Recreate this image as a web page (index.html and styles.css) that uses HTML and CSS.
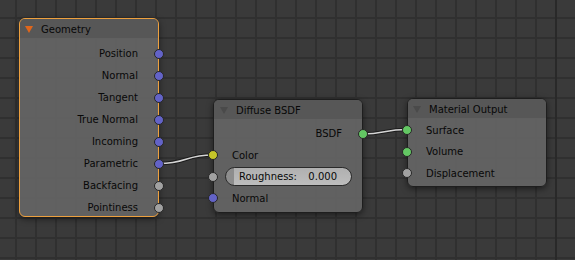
FILE: index.html
```html
<!DOCTYPE html>
<html lang="en">
<head>
    <meta charset="UTF-8">
    <meta name="viewport" content="width=device-width, initial-scale=1.0">
    <title>Node Editor</title>
    <link rel="stylesheet" href="styles.css">
</head>
<body>
    <div class="editor">
        <!-- Links are drawn under the nodes -->
        <svg class="links" width="575" height="260" viewBox="0 0 575 260">
            <path class="link-outline" d="M159,163.5 C187,163.5 185,155 213,155"/>
            <path class="link" d="M159,163.5 C187,163.5 185,155 213,155"/>
            <path class="link-outline" d="M362,134 C385,134 384,129.5 407,129.5"/>
            <path class="link" d="M362,134 C385,134 384,129.5 407,129.5"/>
        </svg>

        <!-- Geometry (input node, selected) -->
        <div class="node node-geometry selected">
            <div class="node-header">
                <span class="toggle"></span>
                <span class="title">Geometry</span>
            </div>
            <div class="node-body">
                <div class="row out">Position<span class="socket vector"></span></div>
                <div class="row out">Normal<span class="socket vector"></span></div>
                <div class="row out">Tangent<span class="socket vector"></span></div>
                <div class="row out">True Normal<span class="socket vector"></span></div>
                <div class="row out">Incoming<span class="socket vector"></span></div>
                <div class="row out">Parametric<span class="socket vector"></span></div>
                <div class="row out">Backfacing<span class="socket value"></span></div>
                <div class="row out">Pointiness<span class="socket value"></span></div>
            </div>
        </div>

        <!-- Diffuse BSDF (shader node) -->
        <div class="node node-diffuse">
            <div class="node-header">
                <span class="toggle"></span>
                <span class="title">Diffuse BSDF</span>
            </div>
            <div class="node-body">
                <div class="row out">BSDF<span class="socket shader"></span></div>
                <div class="row in"><span class="socket color"></span>Color</div>
                <div class="row in slider-row">
                    <span class="socket value"></span>
                    <div class="slider">
                        <span>Roughness:</span>
                        <span>0.000</span>
                    </div>
                </div>
                <div class="row in"><span class="socket vector"></span>Normal</div>
            </div>
        </div>

        <!-- Material Output -->
        <div class="node node-output">
            <div class="node-header">
                <span class="toggle"></span>
                <span class="title">Material Output</span>
            </div>
            <div class="node-body">
                <div class="row in"><span class="socket shader"></span>Surface</div>
                <div class="row in"><span class="socket shader"></span>Volume</div>
                <div class="row in"><span class="socket value"></span>Displacement</div>
            </div>
        </div>
    </div>
</body>
</html>
```

FILE: styles.css
```css
/* Reset default margin and padding */
body, html {
    margin: 0;
    padding: 0;
    height: 100%;
    overflow: hidden;
}

/* Node editor canvas with the grid */
.editor {
    position: relative;
    width: 575px;
    height: 260px;
    overflow: hidden;
    font-family: "DejaVu Sans", Verdana, sans-serif;
    font-size: 10px;
    color: #080808;
    background-color: #3a3a3a;
    background-image:
        linear-gradient(to right, transparent 555px, #292929 555px, #292929 557px, transparent 557px),
        linear-gradient(to right, #303030 2px, transparent 2px),
        linear-gradient(to bottom, #303030 2px, transparent 2px);
    background-size: 100% 100%, 20px 20px, 20px 20px;
    background-position: 0 0, 15px 17px, 15px 17px;
    background-repeat: no-repeat, repeat, repeat;
}

/* Links layer */
.links {
    position: absolute;
    left: 0;
    top: 0;
}

.link-outline {
    fill: none;
    stroke: #1c1c1c;
    stroke-width: 3.6;
}

.link {
    fill: none;
    stroke: #d6d6d6;
    stroke-width: 1.6;
}

/* Nodes sit on the free canvas */
.node {
    position: absolute;
    box-sizing: border-box;
    border: 1px solid #1e1e1e;
    border-radius: 6px;
    background-color: rgba(100, 100, 100, 0.93);
    box-shadow: 0 2px 6px rgba(0, 0, 0, 0.5);
}

.node.selected {
    border-color: #eda03e;
}

.node-geometry {
    left: 19px;
    top: 18px;
    width: 140px;
    height: 199px;
}

.node-diffuse {
    left: 213px;
    top: 99px;
    width: 150px;
    height: 114px;
}

.node-output {
    left: 407px;
    top: 98px;
    width: 140px;
    height: 89px;
}

/* Header with collapse triangle */
.node-header {
    display: flex;
    align-items: center;
    gap: 8px;
    height: 19px;
    padding: 2px 0 0 5px;
    box-sizing: border-box;
    border-radius: 5px 5px 0 0;
    background-color: rgba(86, 86, 86, 0.95);
}

.node-diffuse .node-header {
    padding-left: 6px;
}

.toggle {
    width: 0;
    height: 0;
    border-left: 4px solid transparent;
    border-right: 4px solid transparent;
    border-top: 7px solid #4a4a4a;
}

.selected .toggle {
    border-top-color: #e0661b;
}

.node-body {
    padding-top: 4.5px;
}

.node-diffuse .node-body {
    padding-top: 4px;
}

.node-output .node-body {
    padding-top: 1.5px;
}

/* Socket rows */
.row {
    position: relative;
    display: flex;
    align-items: center;
    height: 22px;
}

.node-diffuse .row,
.node-output .row {
    height: 21.5px;
}

.row.out {
    justify-content: flex-end;
    padding-right: 20px;
}

.row.in {
    padding-left: 18px;
}

.socket {
    position: absolute;
    top: 50%;
    width: 10px;
    height: 10px;
    margin-top: -5px;
    box-sizing: border-box;
    border: 1px solid #262626;
    border-radius: 50%;
}

.row.out .socket {
    right: -6px;
}

.row.in .socket {
    left: -6px;
}

.socket.vector { background-color: #6363c7; }
.socket.value  { background-color: #a1a1a1; }
.socket.color  { background-color: #c7c729; }
.socket.shader { background-color: #63c763; }

/* Number slider */
.row.slider-row {
    padding: 0 10px 0 11px;
}

.slider {
    flex: 1;
    display: flex;
    justify-content: space-between;
    align-items: center;
    height: 19px;
    padding: 0 14px 0 13px;
    box-sizing: border-box;
    border: 1px solid #2a2a2a;
    border-radius: 10px;
    background:
        linear-gradient(to right, #8d8d8d 0, #8d8d8d 8px, transparent 8px),
        linear-gradient(to bottom, #b0b0b0, #bdbdbd);
}
```
